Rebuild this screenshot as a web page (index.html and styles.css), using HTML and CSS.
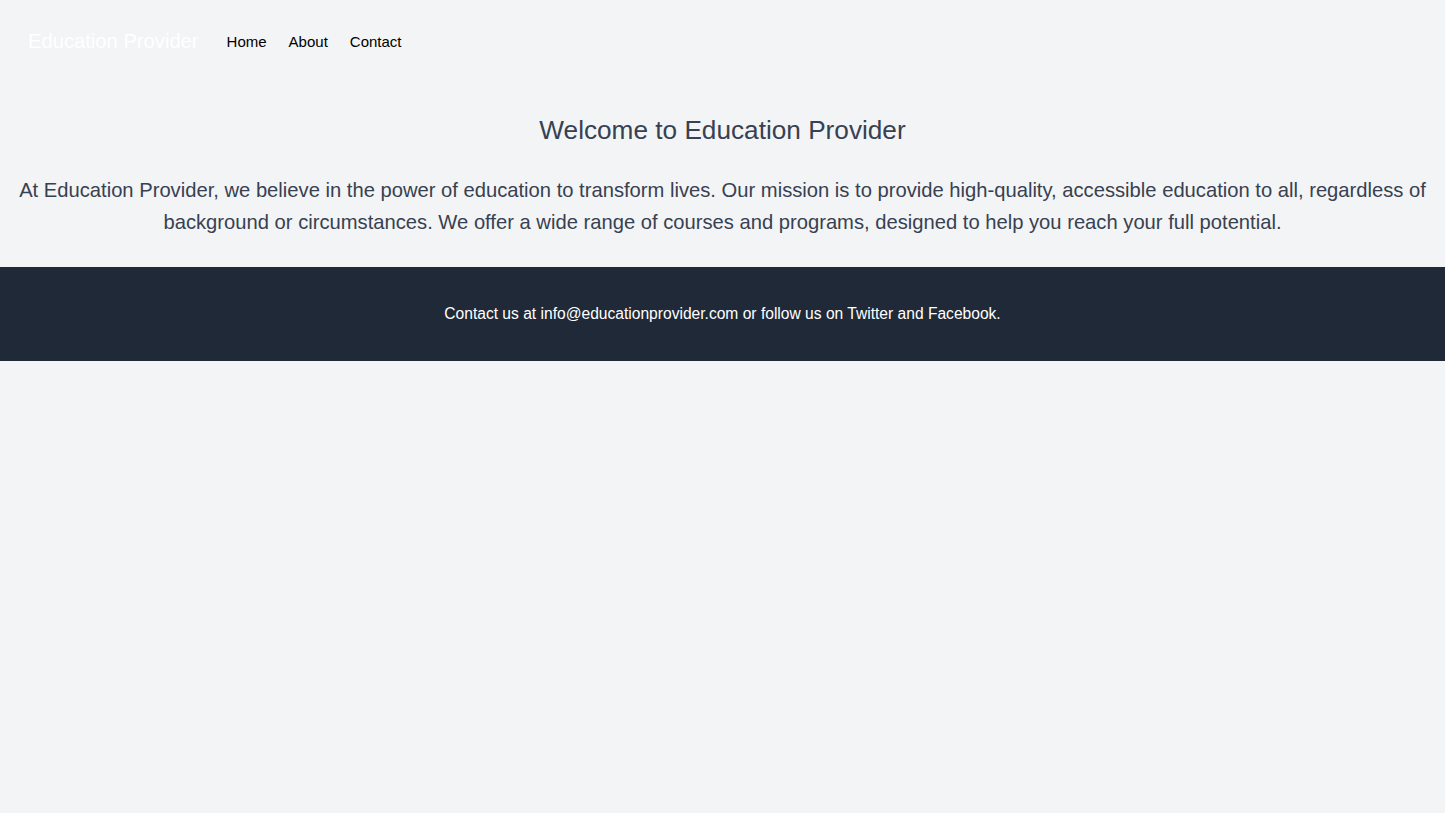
FILE: index.html
```html
<!DOCTYPE html>
<html lang="en">
  <head>
    <meta charset="UTF-8" />
    <meta name="viewport" content="width=device-width, initial-scale=1.0" />
    <title>Education Provider</title>
    <link rel="stylesheet" href="styles.css">
  </head>

  <body>
    <nav class="nav">
      <a href="#" class="logo">Education Provider</a>
      <div class="nav-links">
        <a href="#">Home</a>
        <a href="#">About</a>
        <a href="#">Contact</a>
      </div>
    </nav>

    <main class="intro">
      <h1>Welcome to Education Provider</h1>
      <p>
        At Education Provider, we believe in the power of education to transform lives. Our mission is to provide high-quality, accessible education to all, regardless of background or circumstances. We offer a wide range of courses and programs, designed to help you reach your full potential.
      </p>
    </main>

    <footer class="footer">
      <p>Contact us at info@educationprovider.com or follow us on Twitter and Facebook.</p>
    </footer>
  </body>
</html>
```

FILE: styles.css
```css
body {
  margin: 0;
  padding: 0;
  min-height: 100vh;
  background-color: #f3f4f6;
  font-family: "Liberation Sans", Arial, sans-serif;
}

a {
  color: inherit;
  text-decoration: none;
}

.nav {
  display: flex;
  align-items: center;
  height: 82px;
  padding: 0 28px;
}

.logo {
  color: #ffffff;
  font-size: 20.2px;
  margin-right: 28px;
}

.nav-links {
  display: flex;
  gap: 22px;
  font-size: 15px;
  color: #000000;
}

.intro {
  padding: 30px 12px 29px;
  text-align: center;
  color: #374151;
}

.intro h1 {
  margin: 0 0 26px;
  font-size: 26.2px;
  font-weight: 400;
  line-height: 36px;
}

.intro p {
  margin: 0;
  font-size: 20.2px;
  line-height: 32px;
}

.footer {
  background-color: #1f2937;
  color: #ffffff;
  text-align: center;
  font-size: 15.6px;
  padding: 37px 20px;
}

.footer p {
  margin: 0;
  line-height: 20px;
}
```
